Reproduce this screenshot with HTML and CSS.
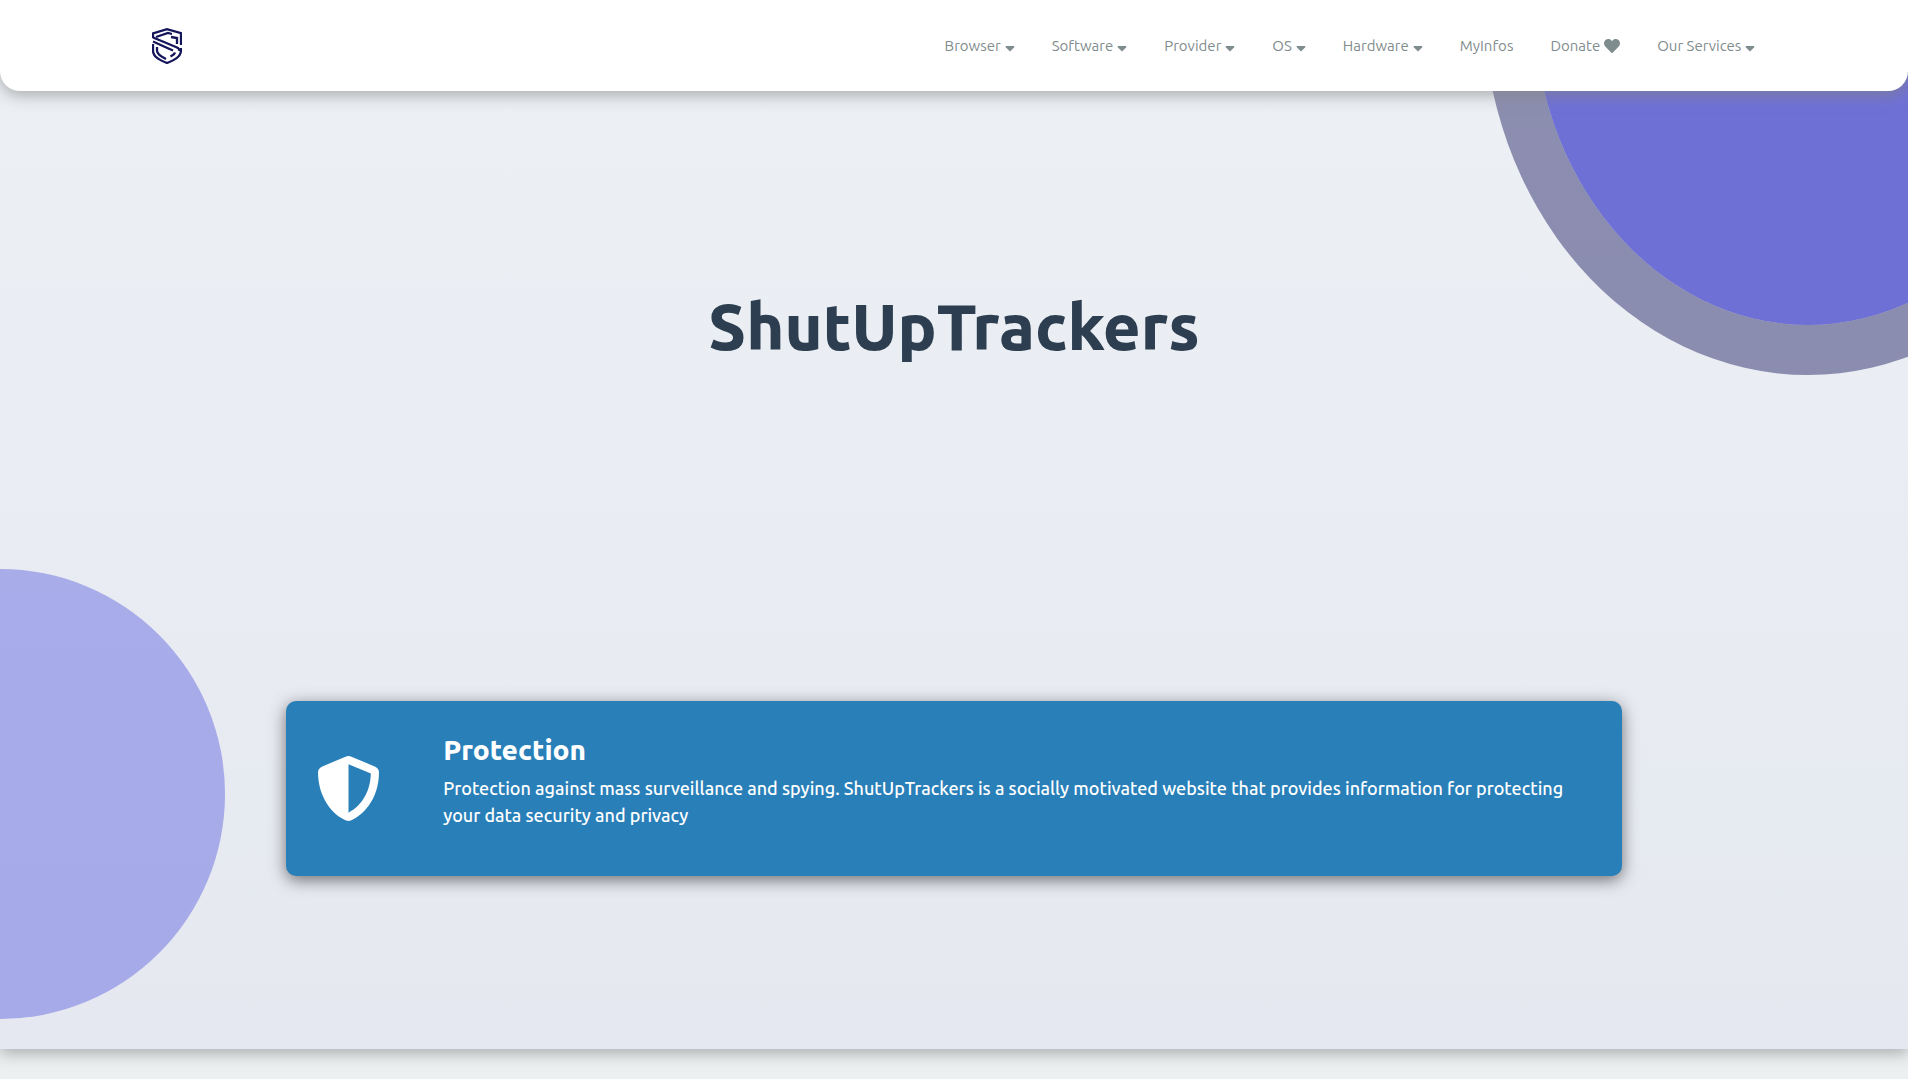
FILE: index.html
```
<!DOCTYPE html>
<html lang="en">
<head>
<meta charset="utf-8">
<meta name="viewport" content="width=device-width, initial-scale=1">
<title>ShutUpTrackers</title>
<link rel="stylesheet" href="styles.css">
</head>
<body>
<svg class="sprite" aria-hidden="true">
  <symbol id="caret" viewBox="0 32 320 512"><path d="M41 288h238c21.400 0 32.100 25.900 17 41L177 448c-9.400 9.400-24.600 9.400-33.900 0L24 329c-15.100-15.100-4.400-41 17-41z"/></symbol>
</svg>
<header class="header">
  <a class="logo" href="#" aria-label="ShutUpTrackers home">
    <svg viewBox="0 0 30 36" fill="none" stroke="#14145a" stroke-width="2.300">
      <path d="M1 10V5.500L15 1.200l14 4V17"/>
      <path d="M4 9L16 5l4 1"/>
      <path d="M1 9.500L12 14l13 5.500c2 1 2.500 2.500 2.500 3.500"/>
      <path d="M1 13.500l11 5 9 4"/>
      <path d="M19 9l6 1v6"/>
      <path d="M1 16v6.500C1 29 8 32 15 35c7-3 14-6 14-12.500V20"/>
      <path d="M5 19v3.500c0 4 4.500 6 9 8.500"/>
      <path d="M23 24.500c-.5 2-2.500 3-4.500 4"/>
    </svg>
  </a>
  <nav aria-label="Main">
    <ul class="menu">
      <li><a href="#">Browser <svg class="caret"><use href="#caret"/></svg></a></li>
      <li><a href="#">Software <svg class="caret"><use href="#caret"/></svg></a></li>
      <li><a href="#">Provider <svg class="caret"><use href="#caret"/></svg></a></li>
      <li><a href="#">OS <svg class="caret"><use href="#caret"/></svg></a></li>
      <li><a href="#">Hardware <svg class="caret"><use href="#caret"/></svg></a></li>
      <li><a href="#">MyInfos</a></li>
      <li><a href="#">Donate <svg class="heart" viewBox="0 0 512 512"><path d="M462.300 62.600C407.500 15.900 326 24.300 275.700 76.200L256 96.500l-19.700-20.300C186.100 24.300 104.500 15.900 49.700 62.600c-62.800 53.600-66.100 149.800-9.900 207.900l193.500 199.800c12.500 12.900 32.800 12.900 45.300 0l193.500-199.800c56.300-58.100 53-154.300-9.800-207.900z"/></svg></a></li>
      <li><a href="#">Our Services <svg class="caret"><use href="#caret"/></svg></a></li>
    </ul>
  </nav>
</header>
<main class="hero">
  <h1>ShutUpTrackers</h1>
  <section class="card">
    <svg class="shield" viewBox="0 0 512 512" aria-hidden="true"><path d="M466.500 83.700l-192-80a48.150 48.150 0 0 0-36.900 0l-192 80C27.700 91.100 16 108.600 16 128c0 198.500 114.500 335.700 221.500 380.300 11.800 4.900 25.100 4.900 36.900 0C360.100 472.600 496 349.300 496 128c0-19.400-11.700-36.900-29.500-44.300zM256.100 446.300l-.1-381 175.900 73.300c-3.300 151.400-82.100 261.100-175.800 307.700z"/></svg>
    <div class="card-text">
      <h2>Protection</h2>
      <p>Protection against mass surveillance and spying. ShutUpTrackers is a socially motivated website that provides information for protecting your data security and privacy</p>
    </div>
  </section>
</main>
</body>
</html>
```
FILE: styles.css
```
*,
*::before,
*::after {
  box-sizing: border-box;
  margin: 0;
  padding: 0;
}

body {
  font-family: Ubuntu, "Open Sans", sans-serif;
  background: #ecf0f1;
  padding-bottom: 30px;
}

.sprite {
  display: none;
}

.header {
  position: relative;
  z-index: 2;
  display: flex;
  align-items: center;
  justify-content: space-between;
  padding: 28px 8% 27px calc(8% - 1px);
  background: #fff;
  border-radius: 0 0 20px 20px;
  box-shadow: 0 4px 16px rgba(130, 130, 130, 0.65);
}

.logo svg {
  display: block;
  width: 30px;
  height: 36px;
}

.menu {
  display: flex;
  gap: 37px;
  list-style: none;
}

.menu a {
  display: flex;
  align-items: center;
  gap: 4px;
  color: #7f8c8d;
  font-size: 15px;
  line-height: 24px;
  text-decoration: none;
}

.menu svg {
  height: 16px;
  fill: currentColor;
}

.caret {
  width: 10px;
}

.heart {
  width: 16px;
}

.hero {
  position: relative;
  overflow: hidden;
  margin-top: -91px;
  padding: 286px 15% 173px;
  background: linear-gradient(#edf1f5, #e5e8f0);
}

body::after {
  content: "";
  display: block;
  height: 20px;
  margin-top: -20px;
  box-shadow: 0 4px 16px rgba(130, 130, 130, 0.65);
  position: relative;
  z-index: -1;
}

.hero::before,
.hero::after {
  content: "";
  position: absolute;
}

.hero::before {
  top: -375px;
  right: -225px;
  width: 650px;
  height: 750px;
  border: 50px solid rgba(44, 44, 108, 0.5);
  border-radius: 50%;
  background: #6f70d6;
  background-clip: padding-box;
}

.hero::after {
  left: -225px;
  bottom: 30px;
  width: 450px;
  height: 450px;
  border-radius: 50%;
  background: rgba(104, 108, 224, 0.5);
}

.hero h1 {
  margin-bottom: 335px;
  color: #2c3e50;
  font-size: 65px;
  font-weight: 800;
  line-height: 80px;
  text-align: center;
}

.card {
  position: relative;
  z-index: 1;
  display: flex;
  align-items: center;
  gap: 62px;
  padding: 30px;
  color: #fff;
  background: #2980b9;
  border-radius: 10px;
  box-shadow: 0 4px 16px rgba(60, 60, 60, 0.7);
}

.shield {
  flex: none;
  width: 65px;
  height: 65px;
  fill: currentColor;
}

.card h2 {
  margin-bottom: 6px;
  font-size: 28px;
  font-weight: 800;
  line-height: 38px;
}

.card p {
  margin-bottom: 17px;
  font-size: 18px;
  font-weight: 500;
  line-height: 27px;
}
```
